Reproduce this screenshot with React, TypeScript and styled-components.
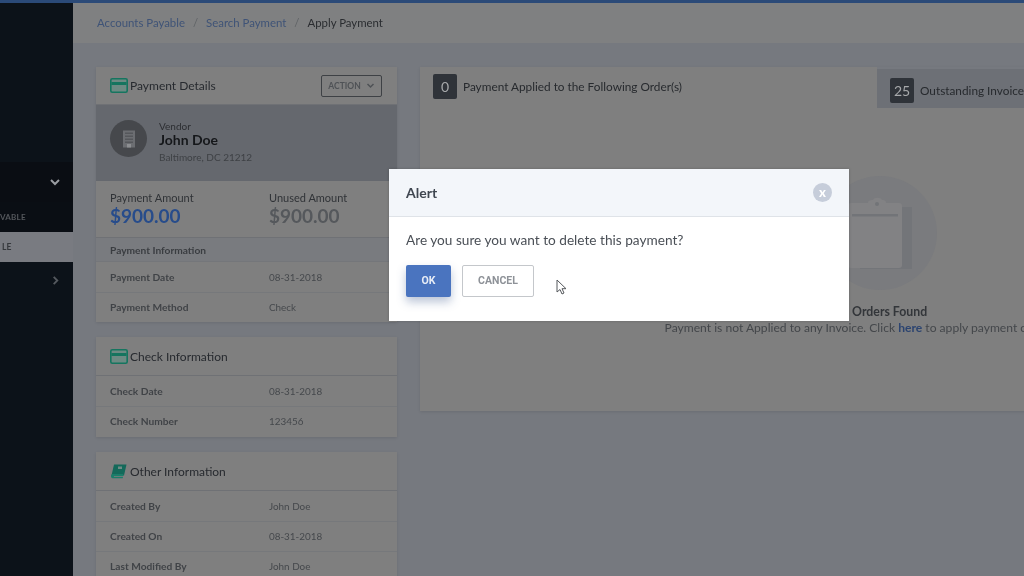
import React from "react";
import styled, { createGlobalStyle } from "styled-components";

const Global = createGlobalStyle`
  html, body { margin: 0; padding: 0; width: 1024px; height: 576px; overflow: hidden; background: #76797f; }
  body { font-family: Lato, "Liberation Sans", sans-serif; }
  *, *::before, *::after { box-sizing: border-box; }
  #root { width: 1024px; height: 576px; overflow: hidden; position: relative; }
`;

const Page = styled.div`
  width: 1024px;
  height: 576px;
  display: flex;
  flex-direction: column;
  background: #76797f;
  filter: blur(0.6px);
  overflow: hidden;
`;
const TopStrip = styled.div`
  height: 3px;
  flex: none;
  background: #2b4a78;
`;
const Body = styled.div`
  flex: 1;
  display: flex;
  min-height: 0;
`;
const Sidebar = styled.aside`
  width: 73px;
  flex: none;
  display: flex;
  flex-direction: column;
  background: #0c1219;
  padding-top: 159px;
`;
const NavHead = styled.div`
  height: 40px;
  background: #0a0d13;
  display: flex;
  align-items: center;
  justify-content: flex-end;
  padding-right: 12px;
  color: #9a9da2;
`;
const NavSub = styled.div`
  height: 30px;
  background: #0a0e14;
  display: flex;
  align-items: center;
  font-size: 8px;
  font-weight: 700;
  color: #55585d;
  letter-spacing: 0.2px;
`;
const NavActive = styled.div`
  height: 30px;
  background: #797b81;
  display: flex;
  align-items: center;
  padding-left: 2px;
  font-size: 8.5px;
  font-weight: 700;
  color: #35383c;
  letter-spacing: 0.2px;
`;
const NavItem = styled.div`
  height: 36px;
  display: flex;
  align-items: center;
  justify-content: flex-end;
  padding-right: 12px;
  color: #55595f;
`;
const Main = styled.main`
  flex: 1;
  min-width: 0;
  display: flex;
  flex-direction: column;
`;
const Crumbs = styled.nav`
  height: 40px;
  flex: none;
  background: #7f8081;
  display: flex;
  align-items: center;
  padding: 0 24px 1px;
  font-size: 11.4px;
  gap: 8px;
`;
const Crumb = styled.span<{ $current?: boolean }>`
  color: ${(p) => (p.$current ? "#2a2c30" : "#3f5377")};
`;
const Sep = styled.span`
  color: #5f6266;
`;
const Content = styled.div`
  flex: 1;
  min-height: 0;
  display: flex;
  gap: 23px;
  padding: 24px 0 0 23px;
  overflow: hidden;
`;
const LeftCol = styled.div`
  width: 301px;
  flex: none;
  display: flex;
  flex-direction: column;
  gap: 15px;
`;
const Card = styled.section<{ $trail?: boolean }>`
  background: #7f7f7f;
  display: flex;
  flex-direction: column;
  flex: none;
  padding-bottom: ${(p) => (p.$trail ? "1px" : "0")};
  box-shadow: 0 1px 3px rgba(0, 0, 0, 0.1);
`;
const CardHead = styled.header<{ $tall?: boolean }>`
  height: ${(p) => (p.$tall ? "39px" : "38px")};
  flex: none;
  display: flex;
  align-items: center;
  gap: 2px;
  padding: 0 15px 0 14px;
  font-size: 12px;
  color: #272a2f;
  border-bottom: 1px solid #6f7175;
`;
const CardTitle = styled.span`
  flex: 1;
`;
const ActionBtn = styled.div`
  width: 61px;
  height: 22px;
  border: 1px solid #3e4145;
  border-radius: 2px;
  display: flex;
  align-items: center;
  justify-content: center;
  gap: 5px;
  font-size: 8.5px;
  font-weight: 700;
  color: #4f5256;
`;
const VendorBand = styled.div`
  height: 76px;
  background: #65686e;
  display: flex;
  align-items: flex-start;
  gap: 12px;
  padding: 15px 0 0 14px;
`;
const Avatar = styled.div`
  width: 37px;
  height: 37px;
  border-radius: 50%;
  background: #46484c;
  display: flex;
  align-items: center;
  justify-content: center;
  flex: none;
`;
const VendorText = styled.div`
  display: flex;
  flex-direction: column;
`;
const VendorLabel = styled.span`
  font-size: 10px;
  line-height: 12px;
  color: #2c2e32;
`;
const VendorName = styled.span`
  font-size: 14px;
  line-height: 16px;
  font-weight: 700;
  color: #15171a;
`;
const VendorAddr = styled.span`
  font-size: 10px;
  line-height: 18px;
  color: #3e4145;
`;
const Amounts = styled.div`
  height: 56px;
  display: grid;
  grid-template-columns: 159px 1fr;
  align-items: center;
  padding-left: 14px;
`;
const AmountBox = styled.div`
  display: flex;
  flex-direction: column;
`;
const AmountLabel = styled.span`
  font-size: 11px;
  line-height: 13px;
  color: #303337;
`;
const AmountValue = styled.span<{ $primary?: boolean }>`
  font-size: 19px;
  line-height: 23px;
  font-weight: 700;
  color: ${(p) => (p.$primary ? "#274c8b" : "#55585c")};
`;
const SubHead = styled.div`
  height: 25px;
  background: #797b7f;
  display: flex;
  align-items: center;
  padding-left: 14px;
  font-size: 10.2px;
  font-weight: 700;
  color: #3a3d41;
  border-top: 1px solid #6f7175;
  border-bottom: 1px solid #74767a;
`;
const Row = styled.div`
  height: 30px;
  display: grid;
  grid-template-columns: 159px 1fr;
  align-items: center;
  padding-left: 14px;
  flex: none;
  & + & {
    box-shadow: inset 0 1px 0 #76787b;
  }
`;
const RowLabel = styled.span`
  font-size: 10.2px;
  font-weight: 700;
  color: #404347;
`;
const RowValue = styled.span`
  font-size: 9.9px;
  color: #45484c;
`;
const RightPanel = styled.section`
  flex: none;
  width: 920px;
  height: 344px;
  background: #7f7f7f;
  display: flex;
  flex-direction: column;
  box-shadow: 0 1px 3px rgba(0, 0, 0, 0.1);
`;
const Tabs = styled.div`
  display: flex;
  flex: none;
  height: 41px;
  background: #76797f;
`;
const Tab = styled.div<{ $active?: boolean }>`
  display: flex;
  align-items: center;
  gap: 6px;
  font-size: 11.8px;
  color: #272a2e;
  white-space: nowrap;
  overflow: hidden;
  ${(p) =>
    p.$active
      ? `width: 457px; height: 41px; background: #7f7f7f; padding: 0 0 2px 13px;`
      : `flex: 1; height: 39px; margin-top: 2px; background: #6d7076; padding: 4px 0 0 13px;`}
`;
const Count = styled.span`
  flex: none;
  width: 24px;
  height: 25px;
  border-radius: 2px;
  background: #2f3339;
  color: #a7a9ab;
  display: flex;
  align-items: center;
  justify-content: center;
  font-size: 14px;
`;
const EmptyState = styled.div`
  flex: 1;
  display: flex;
  flex-direction: column;
  align-items: center;
  overflow: hidden;
  padding-top: 68px;
`;
const EmptyIcon = styled.div`
  width: 114px;
  height: 114px;
  border-radius: 50%;
  background: #7a7b7e;
  display: flex;
  align-items: center;
  justify-content: center;
  flex: none;
`;
const EmptyTitle = styled.div`
  margin-top: 14px;
  font-size: 12.3px;
  line-height: 15px;
  font-weight: 700;
  color: #33363a;
  white-space: nowrap;
`;
const EmptyText = styled.div`
  font-size: 12.1px;
  line-height: 17px;
  color: #44474b;
  white-space: nowrap;
`;
const HereLink = styled.span`
  color: #2c4470;
  font-weight: 700;
`;

const Overlay = styled.div`
  position: absolute;
  inset: 0;
`;
const Modal = styled.div`
  position: absolute;
  left: 389px;
  top: 169px;
  width: 460px;
  height: 152px;
  background: #fff;
  display: flex;
  flex-direction: column;
  box-shadow: 0 0 3px rgba(0, 0, 0, 0.2);
  filter: blur(0.35px);
`;
const ModalHead = styled.div`
  height: 48px;
  flex: none;
  background: #f3f6fa;
  border-bottom: 1px solid #dfe3e8;
  display: flex;
  align-items: center;
  justify-content: space-between;
  padding: 0 17px;
  font-size: 14px;
  font-weight: 700;
  color: #3f4650;
`;
const CloseBtn = styled.div`
  width: 19px;
  height: 19px;
  border-radius: 50%;
  background: #c6cdda;
  color: #fff;
  display: flex;
  align-items: center;
  justify-content: center;
  font-size: 13px;
  font-weight: 900;
  line-height: 1;
`;
const ModalBody = styled.div`
  flex: 1;
  padding: 15px 17px 0;
  display: flex;
  flex-direction: column;
  gap: 16px;
`;
const Question = styled.div`
  font-size: 13.65px;
  line-height: 17px;
  color: #4a4f56;
`;
const Buttons = styled.div`
  display: flex;
  gap: 11px;
  align-items: flex-start;
`;
const OkBtn = styled.div`
  width: 45px;
  height: 32px;
  padding-bottom: 1px;
  background: #4a74bf;
  border-radius: 2px;
  color: #e8edf6;
  display: flex;
  align-items: center;
  justify-content: center;
  font-family: Roboto, sans-serif;
  font-weight: 700;
  font-size: 10.5px;
  box-shadow: 0 5px 10px rgba(60, 90, 140, 0.35);
`;
const CancelBtn = styled.div`
  width: 72px;
  height: 32px;
  padding-bottom: 1px;
  background: #fff;
  border: 1px solid #c4c7cb;
  border-radius: 2px;
  color: #8e9298;
  display: flex;
  align-items: center;
  justify-content: center;
  font-family: Roboto, sans-serif;
  font-weight: 700;
  font-size: 10.5px;
`;
const Cursor = styled.svg`
  position: absolute;
  left: 556px;
  top: 279px;
`;

const Chevron = ({ dir, size = 12 }: { dir: "down" | "right"; size?: number }) => (
  <svg width={size} height={size} viewBox="0 0 12 12" fill="none" stroke="currentColor" strokeWidth="2">
    <path d={dir === "down" ? "M2 4l4 4 4-4" : "M4 2l4 4-4 4"} />
  </svg>
);

const CardIcon = () => (
  <svg width="18" height="15" viewBox="0 0 18 15" fill="none">
    <rect x="0.8" y="0.8" width="16.4" height="13.4" rx="1.5" fill="#6d8a83" stroke="#15755f" strokeWidth="1.6" />
    <rect x="1.5" y="4" width="15" height="3" fill="#15755f" />
  </svg>
);

const BookIcon = () => (
  <svg width="18" height="15" viewBox="0 0 18 15">
    <path d="M4 0.5h12.5L14 11.5H1.5z" fill="#14695a" />
    <path d="M1 12c0-1.5 1-2 2-2h10.5l-.6 2.2H4l-.2.8h9.2l-.3 1.2H2.5C1.5 14.2 1 13.3 1 12z" fill="#1b7d6a" />
    <rect x="8" y="2.5" width="4" height="2.5" fill="#6f8b85" />
  </svg>
);

const BuildingIcon = () => (
  <svg width="14" height="18" viewBox="0 0 14 18">
    <rect x="1" y="0.5" width="12" height="17" fill="#6c6e72" />
    {[2.5, 5.5, 8.5, 11.5].map((y) => (
      <rect key={y} x="3" y={y} width="8" height="1.5" fill="#55575b" />
    ))}
    <rect x="5" y="14" width="4" height="3.5" fill="#8d8f92" />
  </svg>
);

const ClipboardIcon = () => (
  <svg width="80" height="84" viewBox="0 0 80 84">
    <path d="M62 16h10v62H20v-3h42z" fill="#737579" />
    <rect x="8" y="12" width="54" height="65" rx="3" fill="#828284" />
    <path d="M28 12c0-3 3-3 5-3 1-3 8-3 9 0 2 0 4 0 4 3v3H28z" fill="#828284" />
    <circle cx="37" cy="13" r="2" fill="#727478" />
    <rect x="12" y="23" width="46" height="2.5" fill="#727478" />
  </svg>
);

export default function App() {
  return (
    <>
      <Global />
      <Page>
        <TopStrip />
        <Body>
          <Sidebar>
            <NavHead>
              <Chevron dir="down" />
            </NavHead>
            <NavSub>VABLE</NavSub>
            <NavActive>LE</NavActive>
            <NavItem>
              <Chevron dir="right" size={11} />
            </NavItem>
          </Sidebar>
          <Main>
            <Crumbs>
              <Crumb>Accounts Payable</Crumb>
              <Sep>/</Sep>
              <Crumb>Search Payment</Crumb>
              <Sep>/</Sep>
              <Crumb $current>Apply Payment</Crumb>
            </Crumbs>
            <Content>
              <LeftCol>
                <Card>
                  <CardHead>
                    <CardIcon />
                    <CardTitle>Payment Details</CardTitle>
                    <ActionBtn>
                      ACTION
                      <Chevron dir="down" size={9} />
                    </ActionBtn>
                  </CardHead>
                  <VendorBand>
                    <Avatar>
                      <BuildingIcon />
                    </Avatar>
                    <VendorText>
                      <VendorLabel>Vendor</VendorLabel>
                      <VendorName>John Doe</VendorName>
                      <VendorAddr>Baltimore, DC 21212</VendorAddr>
                    </VendorText>
                  </VendorBand>
                  <Amounts>
                    <AmountBox>
                      <AmountLabel>Payment Amount</AmountLabel>
                      <AmountValue $primary>$900.00</AmountValue>
                    </AmountBox>
                    <AmountBox>
                      <AmountLabel>Unused Amount</AmountLabel>
                      <AmountValue>$900.00</AmountValue>
                    </AmountBox>
                  </Amounts>
                  <SubHead>Payment Information</SubHead>
                  <Row>
                    <RowLabel>Payment Date</RowLabel>
                    <RowValue>08-31-2018</RowValue>
                  </Row>
                  <Row>
                    <RowLabel>Payment Method</RowLabel>
                    <RowValue>Check</RowValue>
                  </Row>
                </Card>
                <Card $trail>
                  <CardHead $tall>
                    <CardIcon />
                    <CardTitle>Check Information</CardTitle>
                  </CardHead>
                  <Row>
                    <RowLabel>Check Date</RowLabel>
                    <RowValue>08-31-2018</RowValue>
                  </Row>
                  <Row>
                    <RowLabel>Check Number</RowLabel>
                    <RowValue>123456</RowValue>
                  </Row>
                </Card>
                <Card>
                  <CardHead $tall>
                    <BookIcon />
                    <CardTitle>Other Information</CardTitle>
                  </CardHead>
                  <Row>
                    <RowLabel>Created By</RowLabel>
                    <RowValue>John Doe</RowValue>
                  </Row>
                  <Row>
                    <RowLabel>Created On</RowLabel>
                    <RowValue>08-31-2018</RowValue>
                  </Row>
                  <Row>
                    <RowLabel>Last Modified By</RowLabel>
                    <RowValue>John Doe</RowValue>
                  </Row>
                </Card>
              </LeftCol>
              <RightPanel>
                <Tabs>
                  <Tab $active>
                    <Count>0</Count>
                    Payment Applied to the Following Order(s)
                  </Tab>
                  <Tab>
                    <Count>25</Count>
                    Outstanding Invoices
                  </Tab>
                </Tabs>
                <EmptyState>
                  <EmptyIcon>
                    <ClipboardIcon />
                  </EmptyIcon>
                  <EmptyTitle>No Orders Found</EmptyTitle>
                  <EmptyText>
                    Payment is not Applied to any Invoice. Click <HereLink>here</HereLink> to apply payment on the Invoice
                  </EmptyText>
                </EmptyState>
              </RightPanel>
            </Content>
          </Main>
        </Body>
      </Page>
      <Overlay>
        <Modal>
          <ModalHead>
            Alert
            <CloseBtn>x</CloseBtn>
          </ModalHead>
          <ModalBody>
            <Question>Are you sure you want to delete this payment?</Question>
            <Buttons>
              <OkBtn>OK</OkBtn>
              <CancelBtn>CANCEL</CancelBtn>
            </Buttons>
          </ModalBody>
        </Modal>
        <Cursor width="11" height="16" viewBox="0 0 11 16">
          <path d="M1 1v12l3-2.5 2 4.5 2-1-2-4.3h4z" fill="#fff" stroke="#55585c" strokeWidth="1" />
        </Cursor>
      </Overlay>
    </>
  );
}
